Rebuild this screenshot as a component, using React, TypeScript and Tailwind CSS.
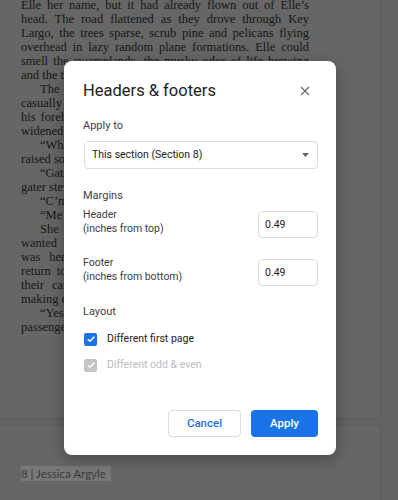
const lines: { t: string; indent?: boolean; last?: boolean }[] = [
  { t: "Elle her name, but it had already flown out of Elle’s" },
  { t: "head. The road flattened as they drove through Key" },
  { t: "Largo, the trees sparse, scrub pine and pelicans flying" },
  { t: "overhead in lazy random plane formations. Elle could" },
  { t: "smell the swamplands, the musky odor of life brewing" },
  { t: "and the thick salt air drifting in from the shallows.", last: true },
  { t: "The sheriff leaned back in his seat and glanced", indent: true },
  { t: "casually at her, a faint line of worry creasing across" },
  { t: "his forehead. He said nothing for a while, but his eyes" },
  { t: "widened when she mentioned the name of the motel.", last: true },
  { t: "“What do you know about that place?” he asked, and", indent: true },
  { t: "raised something like a smile.", last: true },
  { t: "“Gators, mostly,” she said. “Big ones. Old ones. The", indent: true },
  { t: "gater stew is famous down here.”", last: true },
  { t: "“C’mon, you’re kidding me.”", indent: true, last: true },
  { t: "“Me too,” she laughed.", indent: true, last: true },
  { t: "She wanted to tell him everything, how the house", indent: true },
  { t: "wanted her back, how the water had been waiting. It" },
  { t: "was her mother’s place, and she had promised to" },
  { t: "return to it one day, when the storms had passed and" },
  { t: "their carefully built lives had stopped falling apart," },
  { t: "making everything feel so much smaller.", last: true },
  { t: "“Yes ma’am,” the sheriff said, glancing at his young", indent: true },
  { t: "passenger one more time.", last: true },
];

function Label({ children }: { children: React.ReactNode }) {
  return <div className="text-[11px] leading-4 text-[#3c4043]">{children}</div>;
}

function Check({ disabled }: { disabled?: boolean }) {
  return (
    <span
      className={`flex h-[13px] w-[13px] items-center justify-center rounded-[2px] ${
        disabled ? "bg-[#c4c4c4]" : "bg-[#1a73e8]"
      }`}
    >
      <svg width="10" height="10" viewBox="0 0 10 10" fill="none">
        <path d="M1.8 5.2 L4 7.3 L8.3 2.8" stroke="white" strokeWidth="1.5" />
      </svg>
    </span>
  );
}

function NumRow({ a, b }: { a: string; b: string }) {
  return (
    <div className="flex items-start justify-between">
      <div className="text-[10.5px] leading-[14px] text-[#3c4043]">
        <div>{a}</div>
        <div>{b}</div>
      </div>
      <div className="mt-[3px] flex h-[27px] w-[60px] items-center rounded-[4px] border border-[#dadce0] pl-[6px] text-[10.5px] text-[#202124]">
        0.49
      </div>
    </div>
  );
}

export default function App() {
  return (
    <div className="relative h-[500px] w-[398px] overflow-hidden bg-[#626262] font-['Roboto',sans-serif]">
      <div className="flex flex-col gap-[6px]">
        <div className="h-[419px] w-[381px] overflow-hidden border-r border-b border-[#5b5b5b] bg-[#666666]">
          <div className="-mt-[2px] ml-[21px] w-[288px] font-['Liberation_Serif',serif] text-[12.5px] leading-[14px] text-[#161616]">
            {lines.map((l, i) => (
              <div
                key={i}
                className={`whitespace-nowrap ${l.indent ? "pl-[19px]" : ""} ${
                  l.last ? "text-left" : "text-justify [text-align-last:justify]"
                }`}
              >
                {l.t}
              </div>
            ))}
          </div>
        </div>
        <div className="h-[80px] w-[381px] border-r border-t border-[#5b5b5b] bg-[#666666] pl-[21px] pt-[35px]">
          <span className="inline-block h-[15px] w-[90px] bg-[#787878] font-['Lato',sans-serif] text-[11.5px] leading-[15px] text-[#3a3a3a]">
            8 | Jessica Argyle
          </span>
        </div>
      </div>

      <div className="absolute left-[64px] top-[61px] flex h-[394px] w-[272px] flex-col rounded-lg bg-white pl-[19px] pr-[18px] pt-[18px] shadow-[0_4px_16px_rgba(0,0,0,0.3)]">
        <div className="flex h-6 items-center justify-between">
          <div className="text-[16.5px] leading-6 text-[#202124]">Headers &amp; footers</div>
          <svg width="10" height="10" viewBox="0 0 10 10" className="mr-[8px]">
            <path d="M1 1 L9 9 M9 1 L1 9" stroke="#5f6368" strokeWidth="1.1" />
          </svg>
        </div>

        <div className="mt-[15px]">
          <Label>Apply to</Label>
        </div>
        <div className="mt-[7px] ml-px flex h-[28px] items-center justify-between rounded-[4px] border border-[#dadce0] pl-[7px] pr-[8px] text-[10.5px] text-[#202124]">
          <span>This section (Section 8)</span>
          <svg width="7" height="4" viewBox="0 0 7 4">
            <path d="M0 0 L7 0 L3.5 4 Z" fill="#5f6368" />
          </svg>
        </div>

        <div className="mt-[19px]">
          <Label>Margins</Label>
        </div>
        <div className="mt-[4px]">
          <NumRow a="Header" b="(inches from top)" />
        </div>
        <div className="mt-[18px]">
          <NumRow a="Footer" b="(inches from bottom)" />
        </div>

        <div className="mt-[18px]">
          <Label>Layout</Label>
        </div>
        <div className="mt-[9px] ml-px flex h-5 items-center gap-[10px] text-[10.5px] text-[#202124]">
          <Check />
          <span>Different first page</span>
        </div>
        <div className="mt-[6px] ml-px flex h-5 items-center gap-[10px] text-[10.5px] text-[#bdbdbd]">
          <Check disabled />
          <span>Different odd &amp; even</span>
        </div>

        <div className="mt-[35px] flex justify-end gap-[10px]">
          <button className="h-[27px] w-[73px] rounded-[4px] border border-[#dadce0] bg-white text-[11.5px] font-medium text-[#1a73e8]">
            Cancel
          </button>
          <button className="h-[27px] w-[67px] rounded-[4px] bg-[#1a73e8] text-[11.5px] font-medium text-white">
            Apply
          </button>
        </div>
      </div>
    </div>
  );
}
